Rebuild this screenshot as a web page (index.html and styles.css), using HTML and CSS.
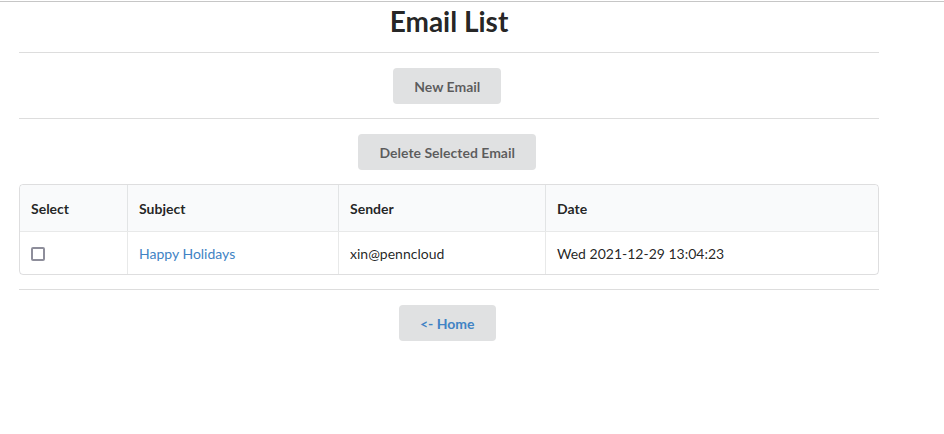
FILE: index.html
```html
<!DOCTYPE html>
<html>
<head>
<meta charset="utf-8">
<title>Email List</title>
<link rel="stylesheet" href="styles.css">
</head>
<body>
<div class="topline"></div>
<div class="container">
  <h1 class="title">Email List</h1>
  <div class="divider"></div>
  <div class="center">
    <button class="btn">New Email</button>
  </div>
  <div class="divider"></div>
  <div class="center">
    <button class="btn">Delete Selected Email</button>
  </div>
  <table class="mail-table">
    <thead>
      <tr>
        <th class="c-select">Select</th>
        <th class="c-subject">Subject</th>
        <th class="c-sender">Sender</th>
        <th class="c-date">Date</th>
      </tr>
    </thead>
    <tbody>
      <tr>
        <td><input type="checkbox" class="check"></td>
        <td><a href="#" class="link">Happy Holidays</a></td>
        <td>xin@penncloud</td>
        <td>Wed 2021-12-29 13:04:23</td>
      </tr>
    </tbody>
  </table>
  <div class="divider"></div>
  <div class="center">
    <button class="btn btn-link">&lt;- Home</button>
  </div>
</div>
</body>
</html>
```
FILE: styles.css
```css
* { box-sizing: border-box; }
html, body {
  margin: 0;
  padding: 0;
  background: #fff;
}
body {
  font-family: Lato, "Helvetica Neue", Arial, sans-serif;
  font-size: 14px;
  line-height: 20px;
  color: rgba(0, 0, 0, 0.87);
}
.topline {
  height: 1px;
  margin-top: 1px;
  background: #c6c6c6;
}
.container {
  width: 860px;
  margin-left: 19px;
}
.title {
  margin: 0 0 14px;
  padding-top: 2px;
  font-size: 28px;
  line-height: 34px;
  font-weight: 700;
  text-align: center;
}
.divider {
  margin: 14px 0;
  height: 0;
  border-top: 1px solid rgba(34, 36, 38, 0.15);
  border-bottom: 1px solid rgba(255, 255, 255, 0.1);
}
.center {
  text-align: center;
}
.btn {
  display: inline-block;
  margin: 0 3.5px 0 0;
  padding: 12px 21px 10px;
  border: none;
  border-radius: 4px;
  background: #e0e1e2;
  color: rgba(0, 0, 0, 0.6);
  font-family: Lato, "Helvetica Neue", Arial, sans-serif;
  font-size: 14px;
  font-weight: 700;
  line-height: 14px;
  cursor: pointer;
  vertical-align: top;
}
.btn-link {
  color: #4183c4;
}
.mail-table {
  width: 860px;
  margin: 14px 0;
  table-layout: fixed;
  border-collapse: separate;
  border-spacing: 0;
  border: 1px solid rgba(34, 36, 38, 0.15);
  border-radius: 4px;
  text-align: left;
}
.mail-table th {
  padding: 14px 11px 12px;
  background: #f9fafb;
  font-weight: 700;
  text-align: left;
  border-left: 1px solid rgba(34, 36, 38, 0.1);
  color: rgba(0, 0, 0, 0.87);
}
.mail-table th:first-child { border-left: none; border-top-left-radius: 4px; }
.mail-table th:last-child { border-top-right-radius: 4px; }
.mail-table td {
  padding: 12px 11px 10px;
  border-top: 1px solid rgba(34, 36, 38, 0.1);
  border-left: 1px solid rgba(34, 36, 38, 0.1);
}
.mail-table td:first-child { border-left: none; }
.c-select { width: 107px; }
.c-subject { width: 211px; }
.c-sender { width: 207px; }
.c-date { width: 333px; }
.check {
  display: block;
  appearance: none;
  -webkit-appearance: none;
  width: 14px;
  height: 14px;
  margin: 3px 0 3px;
  border: 2px solid #8e8e9b;
  border-radius: 2px;
  background: #fff;
}
.link {
  color: #4183c4;
  text-decoration: none;
}
```
